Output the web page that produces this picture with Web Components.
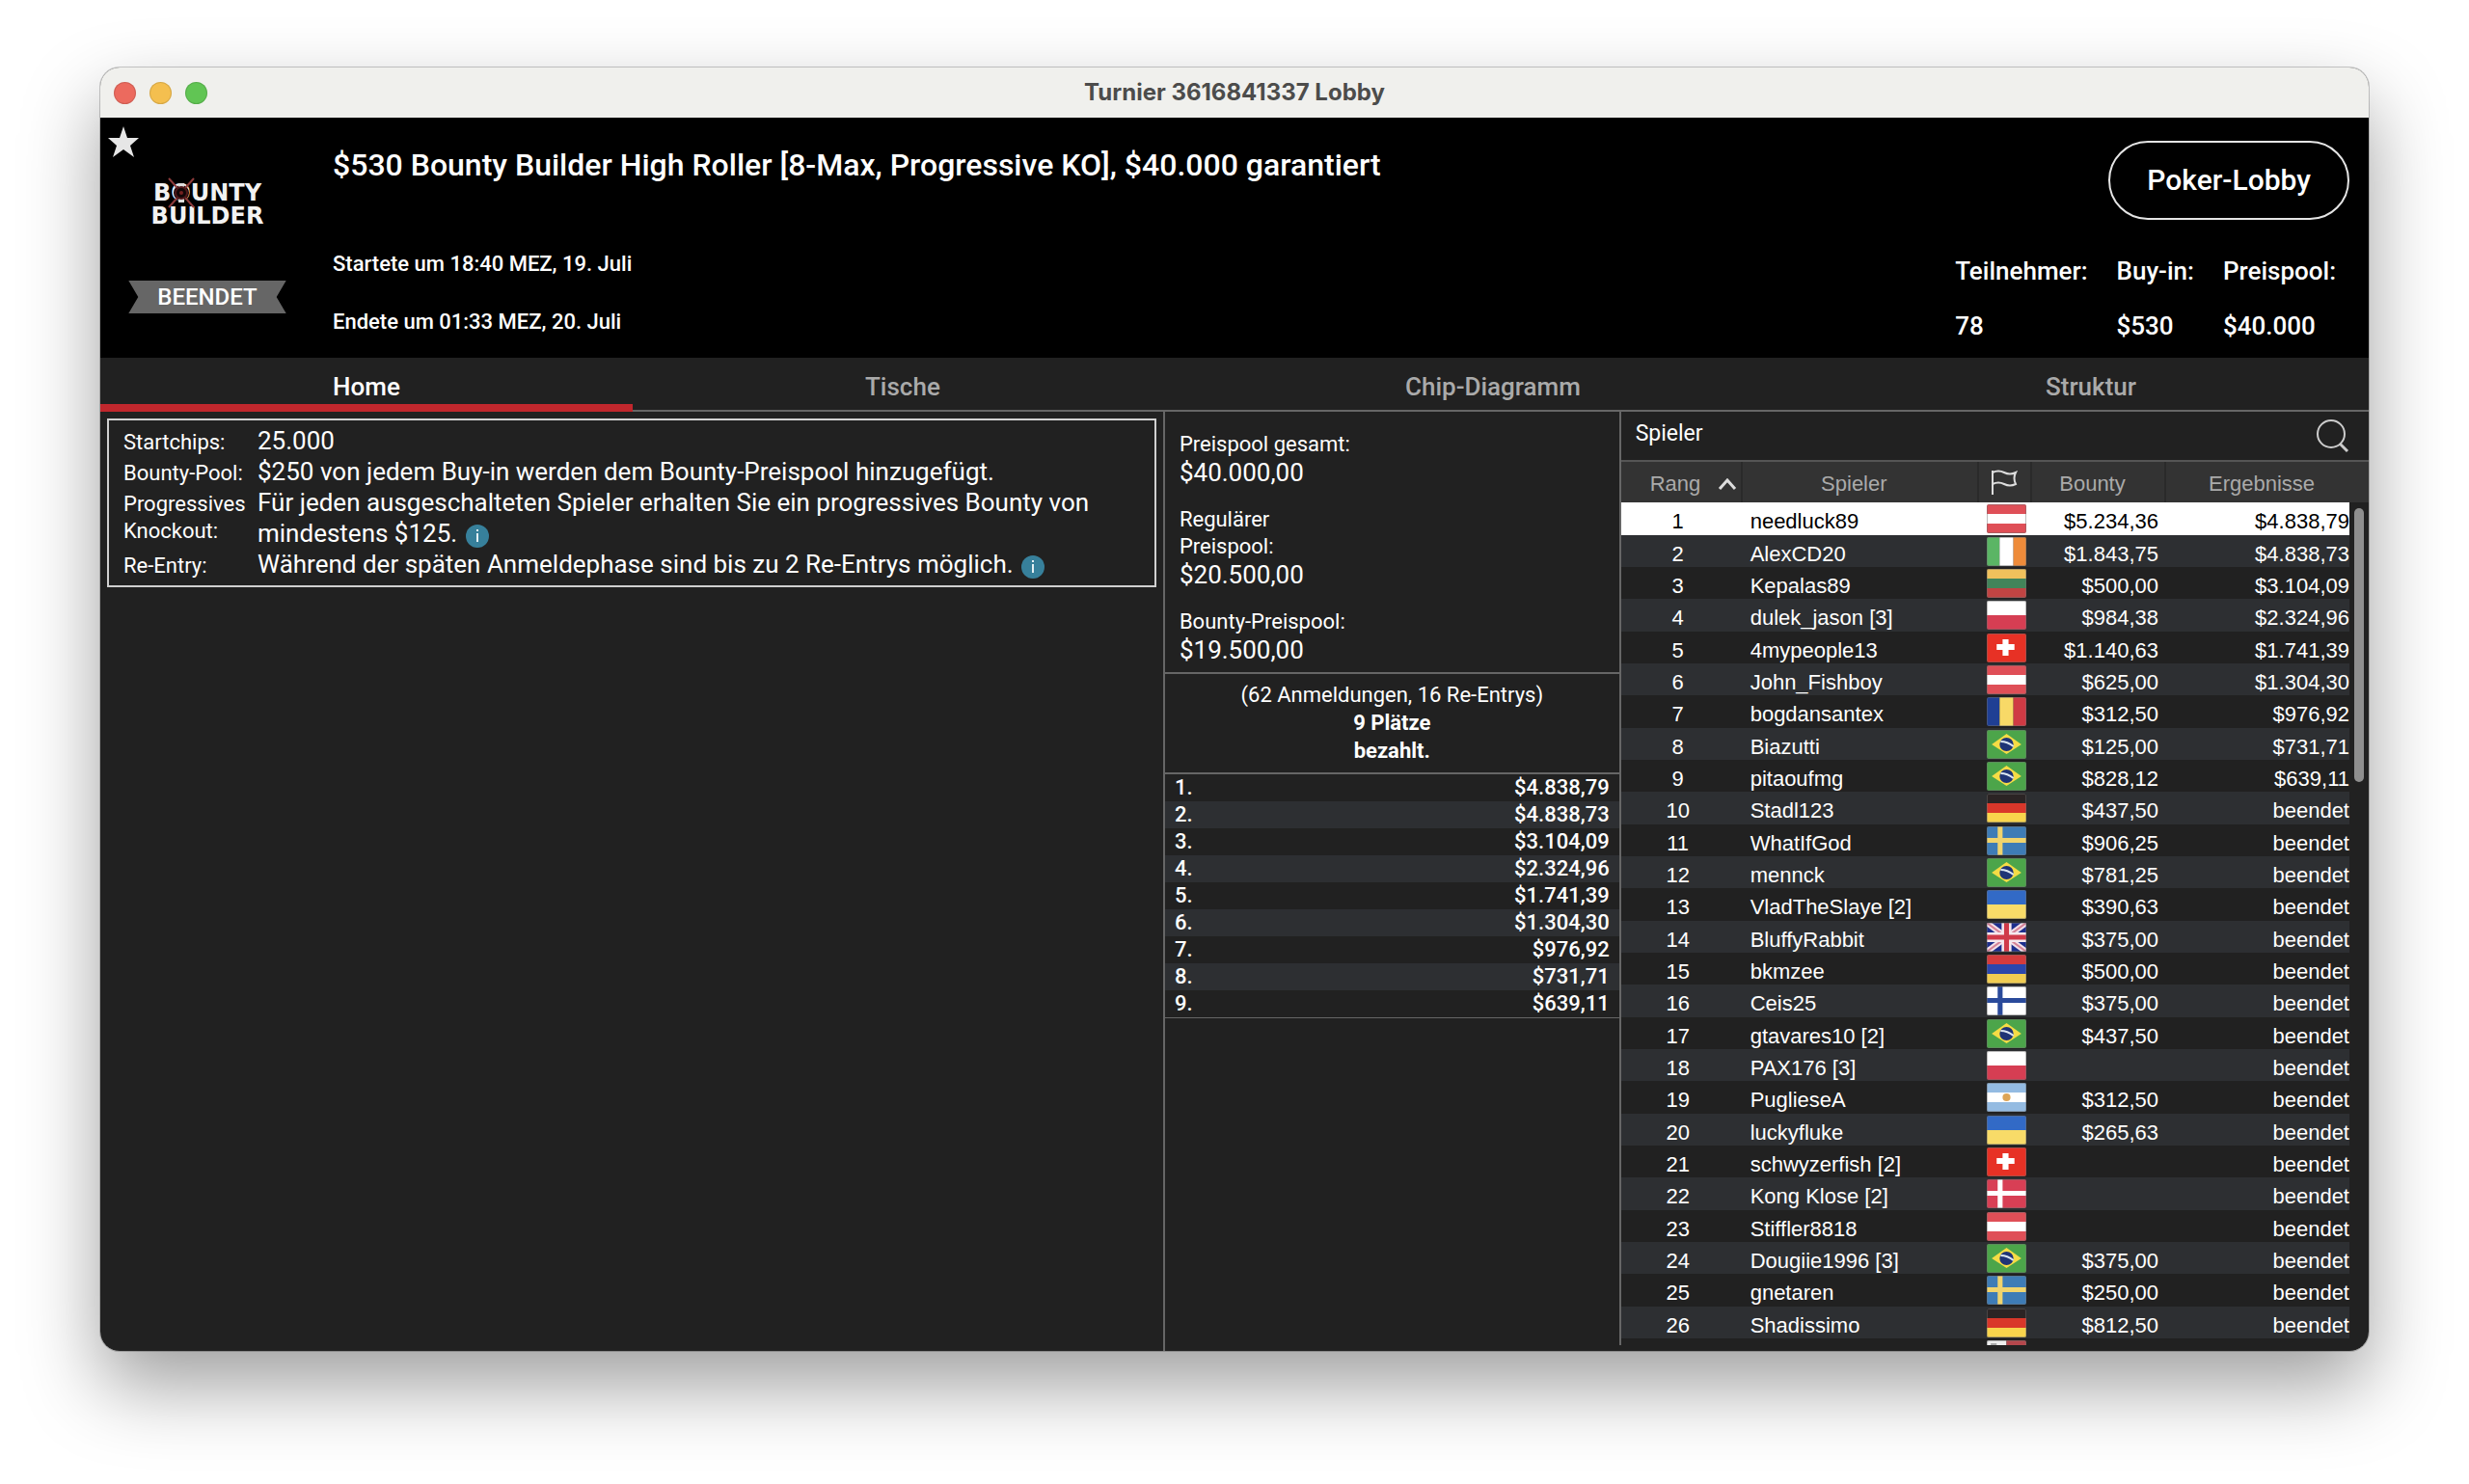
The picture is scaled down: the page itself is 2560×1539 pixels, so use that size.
<!DOCTYPE html>
<html lang="de">
<head>
<meta charset="UTF-8">
<title>Turnier 3616841337 Lobby</title>
<style>
    html, body { margin: 0; background: #fff; }
    body { font-family: Roboto, "Liberation Sans", sans-serif; color: #fff; overflow: hidden; }
</style>
</head>
<body>
<lobby-window>
    <span slot="title">Turnier 3616841337 Lobby</span>
    <lobby-header></lobby-header>
    <lobby-tabs></lobby-tabs>
    <lobby-body>
        <tournament-info></tournament-info>
        <prize-panel></prize-panel>
        <player-list></player-list>
    </lobby-body>
</lobby-window>

<script>
class LobbyWindow extends HTMLElement {
    constructor() {
        super();
        this.attachShadow({ mode: 'open' });
    }

    connectedCallback() {
        this.shadowRoot.innerHTML = `
        <style>
            :host { display: flex; box-sizing: border-box; height: 100vh; padding: 70px 104px 138px; }
            .window { flex: 1; min-width: 0; display: flex; flex-direction: column; background: #212121; border-radius: 20px; overflow: hidden; }
            .frame { flex: 1; min-width: 0; display: flex; border-radius: 20px; box-shadow: 0 0 0 1px rgba(0,0,0,0.2), 0 36px 80px rgba(0,0,0,0.38); }
            .titlebar { display: grid; grid-template-columns: 1fr auto 1fr; align-items: center; height: 52px; flex: none; background: #f0f0ed; color: #4c4c4b; }
            .lights { display: flex; gap: 14px; padding-left: 14px; }
            .lights i { width: 23px; height: 23px; border-radius: 50%; box-shadow: inset 0 0 0 1px rgba(0,0,0,0.12); }
            .title { font: 700 24px/32px Inter, sans-serif; }
        </style>
        <div class="frame">
            <div class="window">
                <div class="titlebar">
                    <div class="lights">
                        <i style="background: #ec6a5e"></i><i style="background: #f4bf4f"></i><i style="background: #61c554"></i>
                    </div>
                    <div class="title"><slot name="title"></slot></div>
                </div>
                <slot></slot>
            </div>
        </div>`;
    }
}
customElements.define('lobby-window', LobbyWindow);

class BountyLogo extends HTMLElement {
    constructor() {
        super();
        this.attachShadow({ mode: 'open' });
    }

    connectedCallback() {
        this.shadowRoot.innerHTML = `
        <style>
            :host { display: block; position: relative; text-align: center; color: #f2f2f2; font: bold 24px/24px "DejaVu Sans", sans-serif; }
            svg { position: absolute; left: 15px; top: -4px; }
        </style>
        BOUNTY<br>BUILDER
        <svg width="32" height="32" viewBox="0 0 32 32">
            <circle cx="16" cy="16" r="8" fill="#120607"/>
            <path d="M13 6h6v4h-6zM13 22h6v4h-6z" fill="#ddd"/>
            <path d="M3 1l9 10M29 1l-9 10M3 31l9-10M29 31l-9-10" stroke="#8d3b3b" stroke-width="2"/>
            <circle cx="16" cy="16" r="6" fill="none" stroke="#4e1719" stroke-width="2"/>
            <circle cx="16" cy="16" r="2" fill="#74201f"/>
        </svg>`;
    }
}
customElements.define('bounty-logo', BountyLogo);

class StatusRibbon extends HTMLElement {
    constructor() {
        super();
        this.attachShadow({ mode: 'open' });
    }

    connectedCallback() {
        this.shadowRoot.innerHTML = `
        <style>
            :host { display: block; padding: 0 30px; background: #666; font-size: 24px; line-height: 34px; font-weight: 500;
                clip-path: polygon(0 0, 100% 0, calc(100% - 10px) 50%, 100% 100%, 0 100%, 10px 50%); }
        </style>
        <slot></slot>`;
    }
}
customElements.define('status-ribbon', StatusRibbon);

class LobbyHeader extends HTMLElement {
    constructor() {
        super();
        this.attachShadow({ mode: 'open' });
    }

    connectedCallback() {
        this.shadowRoot.innerHTML = `
        <style>
            :host { display: grid; grid-template-columns: 241px 1fr auto; flex: none; position: relative; background: #000; font-weight: 500; }
            .star { position: absolute; left: 8px; top: 8px; padding: 0; border: 0; background: none; line-height: 0; }
            .brand { display: flex; flex-direction: column; align-items: center; justify-content: space-between; padding: 66px 19px 46px 0; }
            h1 { margin: 29px 0 69px; font-size: 32px; line-height: 40px; font-weight: 500; }
            p { margin: 0 0 32px; font-size: 22px; line-height: 28px; }
            p:last-child { margin: 0; }
            .side { display: flex; flex-direction: column; align-items: flex-end; padding: 24px 20px 17px 0; }
            .lobby { box-sizing: border-box; height: 82px; padding: 0 38px; border: 2px solid #e4e4e4; border-radius: 41px; background: none; color: #fff; font: 500 30px/36px Roboto, sans-serif; }
            dl { display: flex; gap: 30px; margin: 37px 14px 0 0; font-size: 26px; line-height: 32px; }
            dd { margin: 25px 0 0; }
        </style>
        <button class="star" aria-label="Favorit">
            <svg width="32" height="34" viewBox="0 0 32 34"><path d="M16 1l4 12h12l-9 8 4 12-11-8-11 8 4-12-9-8h12z" fill="#e6e6e6"/></svg>
        </button>
        <div class="brand">
            <bounty-logo></bounty-logo>
            <status-ribbon>BEENDET</status-ribbon>
        </div>
        <div>
            <h1>$530 Bounty Builder High Roller [8-Max, Progressive KO], $40.000 garantiert</h1>
            <p>Startete um 18:40 MEZ, 19. Juli</p>
            <p>Endete um 01:33 MEZ, 20. Juli</p>
        </div>
        <div class="side">
            <button class="lobby">Poker-Lobby</button>
            <dl>
                <div><dt>Teilnehmer:</dt><dd>78</dd></div>
                <div><dt>Buy-in:</dt><dd>$530</dd></div>
                <div><dt>Preispool:</dt><dd>$40.000</dd></div>
            </dl>
        </div>`;
    }
}
customElements.define('lobby-header', LobbyHeader);

class LobbyTabs extends HTMLElement {
    constructor() {
        super();
        this.attachShadow({ mode: 'open' });
    }

    connectedCallback() {
        this.shadowRoot.innerHTML = `
        <style>
            :host { display: flex; flex: none; }
            button { flex: 1 1 auto; padding: 14px 0 10px; border: 0; background: #212121; color: #aaa; font: 500 26px/32px Roboto, sans-serif; box-shadow: inset 0 -2px #666; cursor: pointer; }
            button.active { color: #fff; box-shadow: inset 0 -8px #c1272d; }
        </style>
        ${['Home', 'Tische', 'Chip-Diagramm', 'Struktur'].map((name, i) => `<button class="${i === 0 ? 'active' : ''}">${name}</button>`).join('')}`;

        this.shadowRoot.querySelectorAll('button').forEach(tab => {
            tab.onclick = () => {
                this.shadowRoot.querySelector('.active').classList.remove('active');
                tab.classList.add('active');
            };
        });
    }
}
customElements.define('lobby-tabs', LobbyTabs);

class LobbyBody extends HTMLElement {
    constructor() {
        super();
        this.attachShadow({ mode: 'open' });
    }

    connectedCallback() {
        this.shadowRoot.innerHTML = `
        <style>
            :host { display: grid; grid-template-columns: 937fr 402fr 661fr; grid-template-rows: minmax(0, 1fr); flex: 1; min-height: 0; }
        </style>
        <slot></slot>`;
    }
}
customElements.define('lobby-body', LobbyBody);

class InfoIcon extends HTMLElement {
    constructor() {
        super();
        this.attachShadow({ mode: 'open' });
    }

    connectedCallback() {
        this.shadowRoot.innerHTML = `
        <style>
            :host { display: inline-block; margin-left: 2px; vertical-align: -6px; line-height: 0; }
        </style>
        <svg width="24" height="24" viewBox="0 0 24 24">
            <circle cx="12" cy="12" r="12" fill="#37809b"/>
            <path d="M11 5h2v2h-2zM11 9h2v9h-2z" fill="#e4f0f4"/>
        </svg>`;
    }
}
customElements.define('info-icon', InfoIcon);

class TournamentInfo extends HTMLElement {
    constructor() {
        super();
        this.attachShadow({ mode: 'open' });
    }

    connectedCallback() {
        this.shadowRoot.innerHTML = `
        <style>
            :host { display: block; padding: 7px; }
            dl { display: grid; grid-template-columns: 139px 1fr; margin: 0; padding: 5px 15px 6px; border: 2px solid #d0d0d0; }
            dt { padding-top: 4px; font-size: 22px; line-height: 28px; }
            dd { margin: 0; font-size: 26px; line-height: 32px; }
        </style>
        <dl>
            <dt>Startchips:</dt><dd>25.000</dd>
            <dt>Bounty-Pool:</dt><dd>$250 von jedem Buy-in werden dem Bounty-Preispool hinzugefügt.</dd>
            <dt>Progressives Knockout:</dt><dd>Für jeden ausgeschalteten Spieler erhalten Sie ein progressives Bounty von<br>mindestens $125. <info-icon></info-icon></dd>
            <dt>Re-Entry:</dt><dd>Während der späten Anmeldephase sind bis zu 2 Re-Entrys möglich. <info-icon></info-icon></dd>
        </dl>`;
    }
}
customElements.define('tournament-info', TournamentInfo);

class PrizePanel extends HTMLElement {
    constructor() {
        super();
        this.attachShadow({ mode: 'open' });
    }

    connectedCallback() {
        const prizes = ['$4.838,79', '$4.838,73', '$3.104,09', '$2.324,96', '$1.741,39', '$1.304,30', '$976,92', '$731,71', '$639,11'];
        this.shadowRoot.innerHTML = `
        <style>
            :host { display: block; border-left: 2px solid #666; font-size: 22px; }
            dl { display: grid; gap: 20px; margin: 0; padding: 20px 15px 8px; line-height: 28px; border-bottom: 2px solid #666; }
            dd { margin: 0; font-size: 26px; line-height: 30px; }
            .entries { padding: 7px 0 8px; text-align: center; line-height: 29px; border-bottom: 2px solid #666; }
            b { display: block; }
            table { width: 100%; border-collapse: collapse; border-bottom: 1px solid #666; }
            th, td { padding: 0 10px; font-weight: 500; line-height: 28px; }
            th { text-align: left; }
            td { text-align: right; }
            tr:nth-child(even) { background: #2d2f32; }
        </style>
        <dl>
            <div><dt>Preispool gesamt:</dt><dd>$40.000,00</dd></div>
            <div><dt>Regulärer<br>Preispool:</dt><dd>$20.500,00</dd></div>
            <div><dt>Bounty-Preispool:</dt><dd>$19.500,00</dd></div>
        </dl>
        <div class="entries">(62 Anmeldungen, 16 Re-Entrys)<b>9 Plätze</b><b>bezahlt.</b></div>
        <table>
            ${prizes.map((prize, i) => `<tr><th>${i + 1}.</th><td>${prize}</td></tr>`).join('')}
        </table>`;
    }
}
customElements.define('prize-panel', PrizePanel);

const rows3 = (a, b, c) => `<path d="M0 0h40v10H0z" fill="${a}"/><path d="M0 10h40v10H0z" fill="${b}"/><path d="M0 20h40v10H0z" fill="${c}"/>`;
const rows2 = (a, b) => `<path d="M0 0h40v15H0z" fill="${a}"/><path d="M0 15h40v15H0z" fill="${b}"/>`;
const cols3 = (a, b, c) => `<path d="M0 0h13v30H0z" fill="${a}"/><path d="M13 0h14v30H13z" fill="${b}"/><path d="M27 0h13v30H27z" fill="${c}"/>`;
const nordic = (bg, cross) => `<path d="M0 0h40v30H0z" fill="${bg}"/><path d="M11 0h5v30h-5zM0 12h40v5H0z" fill="${cross}"/>`;

const FLAGS = {
    at: rows3('#df4f57', '#fff', '#df4f57'),
    ie: cols3('#5bb565', '#fff', '#ee8b3a'),
    lt: rows3('#f0c15c', '#43845a', '#c04443'),
    pl: rows2('#fff', '#d63e53'),
    ch: `<path d="M0 0h40v30H0z" fill="#e73125"/><path d="M16 6h6v5h6v6h-6v6h-6v-6h-6v-6h6z" fill="#fff"/>`,
    ro: cols3('#1f3f94', '#f8d967', '#cf3a44'),
    br: `<path d="M0 0h40v30H0z" fill="#4ca54a"/><path d="M5 15L20 4l15 11-15 10z" fill="#f5dc45"/><circle cx="20" cy="15" r="7" fill="#1f3476"/><path d="M14 12q7 0 13 5" stroke="#dbe6f2" stroke-width="2" fill="none"/>`,
    de: rows3('#2b2424', '#d9372a', '#f8d44c'),
    se: nordic('#3e7cb6', '#f0d46d'),
    ua: rows2('#326ac6', '#f8db68'),
    gb: `<path d="M0 0h40v30H0z" fill="#1d2f8d"/><path d="M0 0l40 30M40 0L0 30" stroke="#f2dfe8" stroke-width="6"/><path d="M0 0l40 30M40 0L0 30" stroke="#d58296" stroke-width="2"/><path d="M20 0v30M0 15h40" stroke="#f5e9ee" stroke-width="10"/><path d="M20 0v30M0 15h40" stroke="#d03a49" stroke-width="5"/>`,
    am: rows3('#d43b3c', '#2b46ac', '#f0cc52'),
    fi: nordic('#fff', '#2a4a9b'),
    ar: rows3('#94bbe2', '#fff', '#94bbe2') + '<circle cx="20" cy="15" r="4" fill="#dda557"/>',
    dk: nordic('#d83f55', '#fff'),
    mt: '<path d="M0 0h20v30H0z" fill="#eee"/><path d="M20 0h20v30H20z" fill="#b5474c"/><path d="M4 3h6v2H4z" fill="#aaa"/>'
};

class CountryFlag extends HTMLElement {
    constructor() {
        super();
        this.attachShadow({ mode: 'open' });
    }

    connectedCallback() {
        this.shadowRoot.innerHTML = `
        <style>
            :host { display: block; width: 41px; height: 30px; border-radius: 2px; overflow: hidden; }
            svg { display: block; }
            div { position: relative; }
            div::after { content: ""; position: absolute; inset: 0; border: 1px solid rgba(110,110,110,0.45); border-radius: 2px; }
        </style>
        <div><svg width="41" height="30" viewBox="0 0 40 30" preserveAspectRatio="none">${FLAGS[this.getAttribute('code')]}</svg></div>`;
    }
}
customElements.define('country-flag', CountryFlag);

const PLAYERS = [
    ['needluck89', 'at', '$5.234,36', '$4.838,79'],
    ['AlexCD20', 'ie', '$1.843,75', '$4.838,73'],
    ['Kepalas89', 'lt', '$500,00', '$3.104,09'],
    ['dulek_jason [3]', 'pl', '$984,38', '$2.324,96'],
    ['4mypeople13', 'ch', '$1.140,63', '$1.741,39'],
    ['John_Fishboy', 'at', '$625,00', '$1.304,30'],
    ['bogdansantex', 'ro', '$312,50', '$976,92'],
    ['Biazutti', 'br', '$125,00', '$731,71'],
    ['pitaoufmg', 'br', '$828,12', '$639,11'],
    ['Stadl123', 'de', '$437,50'],
    ['WhatIfGod', 'se', '$906,25'],
    ['mennck', 'br', '$781,25'],
    ['VladTheSlaye [2]', 'ua', '$390,63'],
    ['BluffyRabbit', 'gb', '$375,00'],
    ['bkmzee', 'am', '$500,00'],
    ['Ceis25', 'fi', '$375,00'],
    ['gtavares10 [2]', 'br', '$437,50'],
    ['PAX176 [3]', 'pl', ''],
    ['PuglieseA', 'ar', '$312,50'],
    ['luckyfluke', 'ua', '$265,63'],
    ['schwyzerfish [2]', 'ch', ''],
    ['Kong Klose [2]', 'dk', ''],
    ['Stiffler8818', 'at', ''],
    ['Dougiie1996 [3]', 'br', '$375,00'],
    ['gnetaren', 'se', '$250,00'],
    ['Shadissimo', 'de', '$812,50']
];

class PlayerList extends HTMLElement {
    constructor() {
        super();
        this.attachShadow({ mode: 'open' });
    }

    connectedCallback() {
        this.shadowRoot.innerHTML = `
        <style>
            :host { display: flex; flex-direction: column; min-height: 0; margin-bottom: 6px; border-left: 2px solid #666; }
            .head { display: flex; justify-content: space-between; align-items: center; flex: none; height: 50px; padding: 0 20px 0 15px; border-bottom: 2px solid #555; font-size: 23px; line-height: 28px; }
            .head h2 { margin: 0 0 4px; font: inherit; }
            .head button { padding: 0; border: 0; background: none; line-height: 0; }
            .scroll { position: relative; flex: 1; min-height: 0; overflow: hidden; }
            .thumb { position: absolute; right: 5px; top: 48px; width: 10px; height: 284px; border-radius: 5px; background: #8f8f8f; }
            table { width: 100%; table-layout: fixed; border-collapse: separate; border-spacing: 0; font: 22px/27px "Liberation Sans", Arial, sans-serif; }
            th { box-sizing: border-box; height: 42px; padding: 3px 12px 0 0; background: #333; color: #aaa; font-weight: 400; border-right: 2px solid #2a2a2a; }
            th:last-child { border: 0; }
            th.rank { padding: 3px 4px 0 30px; }
            th.rank div { display: flex; align-items: center; justify-content: space-between; }
            th.flag { padding: 0; line-height: 0; }
            td { box-sizing: border-box; height: 33px; padding: 6px 0 0; vertical-align: top; }
            tr:nth-child(3n+1) td { height: 34px; }
            td.rank { padding-right: 8px; text-align: center; }
            td.name { padding-left: 8px; white-space: nowrap; }
            td.flag { padding: 2px 0 0 8px; }
            td.money { padding-right: 8px; text-align: right; }
            td.result { text-align: right; }
            tbody tr:nth-child(even) td:not(.gutter) { background: #2d2f32; }
            tbody tr:first-child td:not(.gutter) { background: #fff; color: #000; }
        </style>
        <div class="head">
            <h2>Spieler</h2>
            <button aria-label="Suchen">
                <svg width="36" height="36" viewBox="0 0 36 36" fill="none" stroke="#ccc" stroke-width="2">
                    <circle cx="17" cy="16" r="14"/><path d="M26 26l8 8" stroke-width="3"/>
                </svg>
            </button>
        </div>
        <div class="scroll">
            <table>
                <colgroup><col style="width: 126px"><col><col style="width: 55px"><col style="width: 139px"><col style="width: 190px"><col style="width: 20px"></colgroup>
                <thead>
                    <tr>
                        <th class="rank"><div>Rang<svg width="20" height="12" viewBox="0 0 20 12" fill="none" stroke="#ddd" stroke-width="3"><path d="M2 11l8-9 8 9"/></svg></div></th>
                        <th>Spieler</th>
                        <th class="flag" aria-label="Land"><svg width="28" height="26" viewBox="0 0 28 26" fill="none" stroke="#ddd" stroke-width="2"><path d="M2 26V1M2 3q6-3 12 0t12 0q-3 6 0 12-6 3-12 0t-12 0"/></svg></th>
                        <th>Bounty</th>
                        <th colspan="2">Ergebnisse</th>
                    </tr>
                </thead>
                <tbody>
                    ${PLAYERS.map(([name, code, bounty, result = 'beendet'], i) => `
                        <tr><td class="rank">${i + 1}</td><td class="name">${name}</td><td class="flag"><country-flag code="${code}"></country-flag></td><td class="money">${bounty}</td><td class="result">${result}</td><td class="gutter"></td></tr>
                    `).join('')}
                    <tr><td></td><td></td><td class="flag"><country-flag code="mt"></country-flag></td><td></td><td></td><td class="gutter"></td></tr>
                </tbody>
            </table>
            <div class="thumb"></div>
        </div>`;
    }
}
customElements.define('player-list', PlayerList);
</script>
</body>
</html>
